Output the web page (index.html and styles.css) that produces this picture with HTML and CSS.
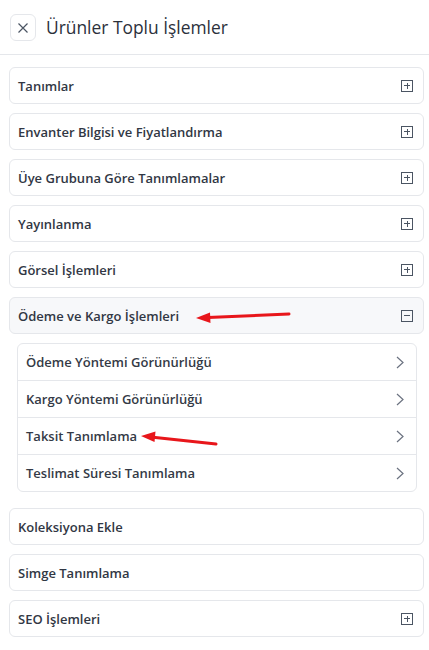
FILE: index.html
```html
<!DOCTYPE html>
<html lang="tr">
<head>
<meta charset="utf-8">
<link rel="stylesheet" href="styles.css">
</head>
<body>
<div class="panel">
  <header class="header">
    <button class="close" aria-label="Kapat">
      <svg width="12" height="12" viewBox="0 0 12 12"><path d="M1.5 1.5 L10.5 10.5 M10.5 1.5 L1.5 10.5" stroke="#4b5563" stroke-width="1.2" fill="none"/></svg>
    </button>
    <h1 class="title">Ürünler Toplu İşlemler</h1>
  </header>
  <div class="list">
    <div class="card"><span class="label">Tanımlar</span><span class="box plus"></span></div>
    <div class="card"><span class="label">Envanter Bilgisi ve Fiyatlandırma</span><span class="box plus"></span></div>
    <div class="card"><span class="label">Üye Grubuna Göre Tanımlamalar</span><span class="box plus"></span></div>
    <div class="card"><span class="label">Yayınlanma</span><span class="box plus"></span></div>
    <div class="card"><span class="label">Görsel İşlemleri</span><span class="box plus"></span></div>
    <div class="card open"><span class="label">Ödeme ve Kargo İşlemleri</span><span class="box minus"></span></div>
    <div class="sub">
      <div class="row"><span class="sublabel">Ödeme Yöntemi Görünürlüğü</span><svg class="chev" width="8" height="13" viewBox="0 0 8 13"><path d="M1 1 L7 6.5 L1 12" stroke="#6b7280" stroke-width="1.2" fill="none"/></svg></div>
      <div class="row"><span class="sublabel">Kargo Yöntemi Görünürlüğü</span><svg class="chev" width="8" height="13" viewBox="0 0 8 13"><path d="M1 1 L7 6.5 L1 12" stroke="#6b7280" stroke-width="1.2" fill="none"/></svg></div>
      <div class="row"><span class="sublabel">Taksit Tanımlama</span><svg class="chev" width="8" height="13" viewBox="0 0 8 13"><path d="M1 1 L7 6.5 L1 12" stroke="#6b7280" stroke-width="1.2" fill="none"/></svg></div>
      <div class="row"><span class="sublabel">Teslimat Süresi Tanımlama</span><svg class="chev" width="8" height="13" viewBox="0 0 8 13"><path d="M1 1 L7 6.5 L1 12" stroke="#6b7280" stroke-width="1.2" fill="none"/></svg></div>
    </div>
    <div class="card"><span class="label">Koleksiyona Ekle</span></div>
    <div class="card"><span class="label">Simge Tanımlama</span></div>
    <div class="card"><span class="label">SEO İşlemleri</span><span class="box plus"></span></div>
  </div>
  <svg class="arrows" width="429" height="650" viewBox="0 0 429 650">
    <path d="M289 314 L208 317.5" stroke="#e8161b" stroke-width="3" stroke-linecap="round" fill="none"/>
    <path d="M196 318 L210 312.5 L210.5 323 Z" fill="#e8161b"/>
    <path d="M216 444 L153 437.3" stroke="#e8161b" stroke-width="3" stroke-linecap="round" fill="none"/>
    <path d="M141 436 L155.5 431.5 L154.5 442 Z" fill="#e8161b"/>
  </svg>
</div>
</body>
</html>
```
FILE: styles.css
```css
* { box-sizing: border-box; }
html, body { margin: 0; padding: 0; background: #fff; }
body { font-family: "Open Sans", "Noto Sans", sans-serif; color: #2f3542; }
.panel { position: relative; width: 429px; height: 650px; overflow: hidden; }
.header {
  height: 55px;
  display: flex;
  align-items: center;
  gap: 10px;
  padding: 0 10px;
  border-bottom: 1px solid #e5e7eb;
}
.close {
  width: 26px; height: 27px;
  border: 1px solid #e5e7eb;
  border-radius: 6px;
  background: #fff;
  display: flex; align-items: center; justify-content: center;
  padding: 0;
  margin-top: 1px;
}
.title { margin: 0; font-size: 17.4px; font-weight: 500; color: #2b303b; }
.list { display: flex; flex-direction: column; gap: 9px; padding: 12px 5px 0 9px; }
.card {
  height: 37px;
  border: 1px solid #e5e7eb;
  border-radius: 6px;
  display: flex; align-items: center; justify-content: space-between;
  padding: 0 10px 0 8px;
  background: #fff;
}
.card.open { background: #f7f8fa; }
.label { font-size: 13px; font-weight: 600; color: #313744; }
.box {
  width: 12px; height: 12px;
  border: 1px solid #4b5563;
  position: relative;
}
.box::before {
  content: ""; position: absolute; left: 2px; top: 4.5px; width: 6px; height: 1px; background: #4b5563;
}
.plus::after {
  content: ""; position: absolute; left: 4.5px; top: 2px; width: 1px; height: 6px; background: #4b5563;
}
.sub {
  margin: 0 7px 7px 8px;
  border: 1px solid #e5e7eb;
  border-radius: 6px;
  background: #fff;
}
.row {
  height: 37px;
  display: flex; align-items: center; justify-content: space-between;
  padding: 0 12px 0 8px;
  border-bottom: 1px solid #e5e7eb;
}
.row:last-child { border-bottom: none; height: 36px; }
.sublabel { font-size: 13px; font-weight: 600; color: #343a46; }
.chev { display: block; }
.arrows { position: absolute; left: 0; top: 0; pointer-events: none; }
```
